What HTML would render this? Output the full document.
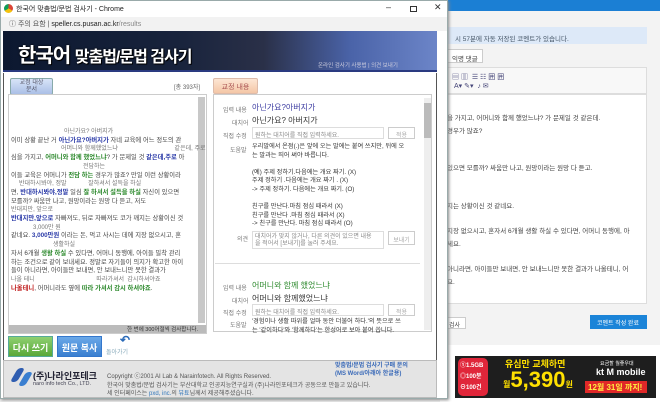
<!DOCTYPE html>
<html><head><meta charset="utf-8"><style>
*{margin:0;padding:0;box-sizing:border-box}
body{width:660px;height:402px;overflow:hidden;background:#f0f0f0;font-family:"Liberation Sans","Noto Sans CJK KR",sans-serif;position:relative;font-size:7px;color:#444}
.a{position:absolute;white-space:nowrap}
.b{color:#2a3aa8;font-weight:bold}.g{color:#2e8a2e;font-weight:bold}.r{color:#c02020;font-weight:bold}
.n{color:#777;font-size:6px}
</style></head><body>
<div class="a" style="left:440px;top:0;width:220px;height:11px;background:#1b7fd4"></div>
<div class="a" style="left:440px;top:11px;width:220px;height:391px;background:#f3f3f3"></div>
<div class="a" style="left:447px;top:27px;width:200px;height:17px;background:#dde9f8;color:#456;padding:6px 0 0 8px;font-size:6.5px">시 57분에 자동 저장된 코멘트가 있습니다.</div>
<div class="a" style="left:447px;top:49px;width:36px;height:14px;background:#fff;border:1px solid #ccc;padding:3px 0 0 4px;font-size:6.5px">익명 댓글</div>
<div class="a" style="left:447px;top:67px;width:200px;height:27px;background:#f8f8f8;border:1px solid #ddd;color:#447;font-size:7px;padding:4px 0 0 4px">▤ ▥ &nbsp;☰ ☷ 囲 囲<br>&nbsp;A▾ ✎▾ &nbsp;♪ ✉</div>
<div class="a" style="left:447px;top:94px;width:200px;height:210px;background:#fff;border:1px solid #ddd"></div>
<div class="a" style="left:447px;top:112px;font-size:6.5px">을 가지고, 어머니와 함께 했었느냐? 가 문제일 것 같은데.</div>
<div class="a" style="left:447px;top:125px;font-size:6.5px">경우가 많죠?</div>
<div class="a" style="left:447px;top:162px;font-size:6.5px">있으면 모를까? 싸움만 나고, 원망이라는 원망 다 듣고.</div>
<div class="a" style="left:447px;top:200px;font-size:6.5px">지는 상황이신 것 같네요.</div>
<div class="a" style="left:447px;top:225px;font-size:6.5px">지장 없으시고, 혼자서 6개월 생활 하실 수 있다면, 어머니 동행에, 아</div>
<div class="a" style="left:447px;top:238px;font-size:6.5px">세요.</div>
<div class="a" style="left:447px;top:263px;font-size:6.5px">아니라면, 아이들만 보내면, 안 보내느니만 못한 결과가 나올테니, 어</div>
<div class="a" style="left:447px;top:276px;font-size:6.5px">요.</div>
<div class="a" style="left:447px;top:317px;width:19px;height:12px;background:#fff;border:1px solid #ccc;font-size:6px;padding:2px 0 0 1px">검사</div>
<div class="a" style="left:590px;top:315px;width:57px;height:14px;background:#1b84d8;color:#fff;font-size:6px;padding:3px 0 0 7px">코멘트 작성 완료</div>
<div class="a" style="left:440px;top:345px;width:220px;height:57px;background:#fff"></div>
<div class="a" style="left:455px;top:356px;width:201px;height:42px;background:#1e1e1e"></div>
<div class="a" style="left:458px;top:358px;width:30px;height:38px;background:#e0263a;border-radius:5px;color:#fff;font-size:6px;font-weight:bold;padding:3px 0 0 2px;line-height:11px">①1.5GB<br>◎100분<br>⊖100건</div>
<div class="a" style="left:505px;top:357px;color:#ffe000;font-weight:bold;font-size:9px">유심만 교체하면</div>
<div class="a" style="left:503px;top:368px;color:#ffe000;font-weight:bold;font-size:22px;line-height:24px"><span style="font-size:8px">월</span>5,390<span style="font-size:8px">원</span></div>
<div class="a" style="left:600px;top:360px;color:#fff;font-size:5px">요금할 월좋우대</div>
<div class="a" style="left:596px;top:367px;color:#fff;font-size:9px;font-weight:bold">kt M mobile</div>
<div class="a" style="left:585px;top:381px;width:62px;height:12px;background:#e02828;color:#ffef40;font-size:8px;font-weight:bold;padding:1px 0 0 3px">12월 31일 까지!</div>
<div class="a" style="left:0;top:0;width:448px;height:399px;background:#fff;border:1px solid #9aa;box-shadow:1px 1px 3px #888"></div>
<div class="a" style="left:1px;top:1px;width:446px;height:16px;background:#fff"></div>
<div class="a" style="left:4px;top:4px;width:9px;height:9px;border-radius:50%;background:conic-gradient(#db4437 0 33%,#f4c20d 0 66%,#0f9d58 0)"></div>
<div class="a" style="left:16px;top:4px;font-size:7px;color:#222">한국어 맞춤법/문법 검사기 - Chrome</div>
<div class="a" style="left:386px;top:2px;font-size:9px;color:#333">–</div>
<div class="a" style="left:410px;top:6px;width:7px;height:6px;border:1px solid #333"></div>
<div class="a" style="left:434px;top:2px;font-size:9px;color:#333">✕</div>
<div class="a" style="left:1px;top:17px;width:446px;height:14px;background:#f2f2f2;font-size:7px;color:#555;padding:2px 0 0 8px">ⓘ 주의 요함 | <span style="color:#222">speller.cs.pusan.ac.kr</span><span style="color:#888">/results</span></div>
<div class="a" style="left:3px;top:31px;width:434px;height:41px;background:linear-gradient(90deg,#0c1830 0%,#18233c 40%,#2a3048 60%,#4a63a8 80%,#6c85c8 100%);border-bottom:2px solid #2a3a80"></div>
<div class="a" style="left:18px;top:39px;color:#fff;font-size:20px;font-weight:bold;letter-spacing:-1px;text-shadow:0 0 2px #000,1px 1px 0 #000">한국어 <span style="font-size:16px">맞춤법/문법 검사기</span></div>
<div class="a" style="left:318px;top:61px;color:#ccd;font-size:5.5px">온라인 검사기 사용법 | 의견 보내기</div>
<div class="a" style="left:3px;top:73px;width:434px;height:287px;background:#fff;border-left:1px solid #555;border-right:1px solid #555"></div>
<div class="a" style="left:10px;top:78px;width:43px;height:17px;background:linear-gradient(#d8e4f8,#aabfe6);border:1px solid #8aa;border-radius:2px;color:#556;font-size:6px;text-align:center;line-height:7px;padding-top:1px">교정 대상<br>문서</div>
<div class="a" style="left:174px;top:82px;font-size:6px;color:#666">[총 393자]</div>
<div class="a" style="left:8px;top:94px;width:199px;height:240px;border:1px solid #ccc;background:#fff"></div>
<div class="a" style="left:198px;top:97px;width:7px;height:226px;background:#c8c8c8"></div>
<div class="a" style="left:9px;top:325px;width:197px;height:8px;background:#bbb;color:#333;font-size:5.5px;text-align:right;padding-right:8px">한 번에 300어절씩 검사합니다.</div>
<div style="position:absolute;left:11px;top:128px;font-size:6.3px;line-height:8.7px;white-space:nowrap">
<div class="n" style="padding-left:53px">아닌가요? 아버지가</div>
<div>이미 상황 끝난 거 <span class="b">아닌가요?아버지가</span> 자네 교육에 어느 정도의 관</div>
<div class="n" style="padding-left:50px">어머니와 함께했었느냐 <span style="padding-left:55px">같은데, 주로</span></div>
<div>심을 가지고, <span class="g">어머니와 함께 했었느냐</span>? 가 문제일 것 <span class="b">같은데,주로</span> 아</div>
<div class="n" style="padding-left:72px">전담하는</div>
<div>이들 교육은 어머니가 <span class="g">전담 하는</span> 경우가 많죠? 만일 이런 상황이라</div>
<div class="n" style="padding-left:8px">반대하시봐야, 정말 <span style="padding-left:20px">잘하셔서 설득을 하실</span></div>
<div>면, <span class="b">반대하시봐야,정말</span> 일심 <span class="g">잘 하셔서 설득을 하실</span> 자신이 있으면</div>
<div>모를까? 싸움만 나고, 원망이라는 원망 다 듣고, 저도</div>
<div class="n">반대지만, 앞으로</div>
<div><span class="b">반대지만,앞으로</span> 자빠져도, 뒤로 자빠져도 코가 깨지는 상황이신 것</div>
<div class="n" style="padding-left:22px">3,000만 원</div>
<div>같네요. <span class="b">3,000만원</span> 이라는 돈, 먹고 사시는 데에 지장 없으시고, 혼</div>
<div class="n" style="padding-left:42px">생활하실</div>
<div>자서 6개월 <span class="g">생활 하실</span> 수 있다면, 어머니 동행에, 아이들 밀착 관리</div>
<div>하는 조건으로 같이 보내세요. 정말로 자기들이 의지가 확고한 아이</div>
<div>들이 아니라면, 아이들만 보내면, 안 보내느니만 못한 결과가</div>
<div class="n">나올 테니 <span style="padding-left:60px">따라가셔서 &nbsp;감시하셔야죠</span></div>
<div><span class="r">나올테니</span>, 어머니라도 옆에 <span class="g">따라 가셔서 감시 하셔야죠</span>.</div>
</div>
<div class="a" style="left:213px;top:78px;width:45px;height:16px;background:linear-gradient(#fde6d4,#f4c6a6);border:1px solid #dba;border-radius:2px;color:#a55;font-size:7px;text-align:center;padding-top:3px">교정 내용</div>
<div class="a" style="left:213px;top:94px;width:219px;height:238px;border:1px solid #ccc;background:#fff"></div>
<div class="a" style="left:424px;top:98px;width:7px;height:232px;background:#eee"></div>
<div class="a" style="left:424px;top:103px;width:7px;height:35px;background:#bbb"></div>
<div style="position:absolute;left:220px;top:102px;font-size:6.5px;color:#333">
<div class="a n" style="left:3px;top:3px">입력 내용</div><div class="a" style="left:32px;top:0;color:#3a3aa0;font-size:8px">아닌가요?아버지가</div>
<div class="a n" style="left:12px;top:16px">대치어</div><div class="a" style="left:32px;top:13px;font-size:8px">아닌가요? 아버지가</div>
<div class="a n" style="left:3px;top:29px">직접 수정</div><div class="a" style="left:32px;top:25px;width:132px;height:12px;border:1px solid #ddd;color:#888;font-size:6px;padding:2px">원하는 대치어를 직접 입력하세요.</div><div class="a" style="left:168px;top:25px;width:27px;height:12px;border:1px solid #ccc;color:#aaa;font-size:6px;text-align:center;padding-top:2px">적용</div>
<div class="a n" style="left:10px;top:43px">도움말</div>
<div class="a" style="left:32px;top:41px;line-height:8.6px;font-size:6.2px">우리말에서 온점(.)은 앞에 오는 말에는 붙여 쓰지만, 뒤에 오<br>는 말과는 띄어 써야 바릅니다.<br><br>(예) 주제 정하기.다음에는 개요 짜기. (X)<br>주제 정하기 .다음에는 개요 짜기 . (X)<br>-&gt; 주제 정하기. 다음에는 개요 짜기. (O)<br><br>친구를 만난다.마침 점심 때라서 (X)<br>친구를 만난다 .마침 점심 때라서 (X)<br>-&gt; 친구를 만난다. 마침 점심 때라서 (O)</div>
<div class="a n" style="left:17px;top:132px">의견</div><div class="a" style="left:32px;top:129px;width:132px;height:18px;border:1px solid #ddd;color:#888;font-size:6px;padding:2px;line-height:7px">대치어가 맞지 않거나, 다른 의견이 있으면 내용<br>을 적어서 [보내기]를 눌러 주세요.</div><div class="a" style="left:168px;top:129px;width:27px;height:14px;border:1px solid #ccc;color:#aaa;font-size:6px;text-align:center;padding-top:3px">보내기</div>
<div class="a" style="left:-5px;top:161px;width:205px;height:1px;background:#ddd"></div>
<div class="a n" style="left:3px;top:181px">입력 내용</div><div class="a" style="left:32px;top:178px;color:#2e8a2e;font-size:8px">어머니와 함께 했었느냐</div>
<div class="a n" style="left:12px;top:194px">대치어</div><div class="a" style="left:32px;top:191px;font-size:8px">어머니와 함께했었느냐</div>
<div class="a n" style="left:3px;top:206px">직접 수정</div><div class="a" style="left:32px;top:202px;width:132px;height:12px;border:1px solid #ddd;color:#888;font-size:6px;padding:2px">원하는 대치어를 직접 입력하세요.</div><div class="a" style="left:168px;top:202px;width:27px;height:12px;border:1px solid #ccc;color:#aaa;font-size:6px;text-align:center;padding-top:2px">적용</div>
<div class="a n" style="left:10px;top:218px">도움말</div><div class="a" style="left:32px;top:216px;line-height:8.6px;font-size:6.2px">'경험이나 생활 따위를 얼마 동안 더불어 하다.'의 뜻으로 쓰<br>는 '같이하다'와 '함께하다'는 한성어로 보아 붙여 씁니다.</div>
</div>
<div class="a" style="left:8px;top:336px;width:45px;height:21px;background:linear-gradient(#8ed070,#5aa838);border:1px solid #5a9;color:#fff;font-size:9px;font-weight:bold;text-align:center;padding-top:4px">다시 쓰기</div>
<div class="a" style="left:57px;top:336px;width:45px;height:21px;background:linear-gradient(#6aa8e8,#3a7fd0);border:1px solid #37c;color:#fff;font-size:9px;font-weight:bold;text-align:center;padding-top:4px">원문 복사</div>
<div class="a" style="left:120px;top:333px;color:#2a6ab8;font-size:12px;font-weight:bold">↶</div>
<div class="a" style="left:106px;top:347px;color:#8ab;font-size:6px">돌아가기</div>
<div class="a" style="left:3px;top:360px;width:434px;height:38px;background:#e4e4e4;border:1px solid #bbb"></div>
<div class="a" style="left:14px;top:368px;width:7px;height:14px;background:#2f5db0;transform:skewX(-30deg);border-radius:3px"></div>
<div class="a" style="left:22px;top:372px;width:7px;height:14px;background:#3a7fd0;transform:skewX(-30deg);border-radius:3px"></div>
<div class="a" style="left:33px;top:369px;color:#223;font-size:9px;font-weight:bold">(주)나라인포테크</div>
<div class="a" style="left:33px;top:381px;color:#445;font-size:5.5px">naro info tech Co., LTD.</div>
<div class="a" style="left:107px;top:373px;font-size:6px;color:#555;line-height:8.5px">Copyright ⓒ2001 AI Lab &amp; Narainfotech. All Rights Reserved.<br>한국어 맞춤법/문법 검사기는 부산대학교 인공지능연구실과 (주)나라인포테크가 공동으로 만들고 있습니다.<br>세 인터페이스는 <span style="color:#37b">pxd, inc.</span>의 <span style="color:#37b">뷰툐</span>님께서 제공해주셨습니다.</div>
<div class="a" style="left:335px;top:362px;font-size:6px;color:#3a6ab8;line-height:8px;font-weight:bold">맞춤법/문법 검사기 구매 문의<br>(MS Word/아래아 한글용)</div>
</body></html>
